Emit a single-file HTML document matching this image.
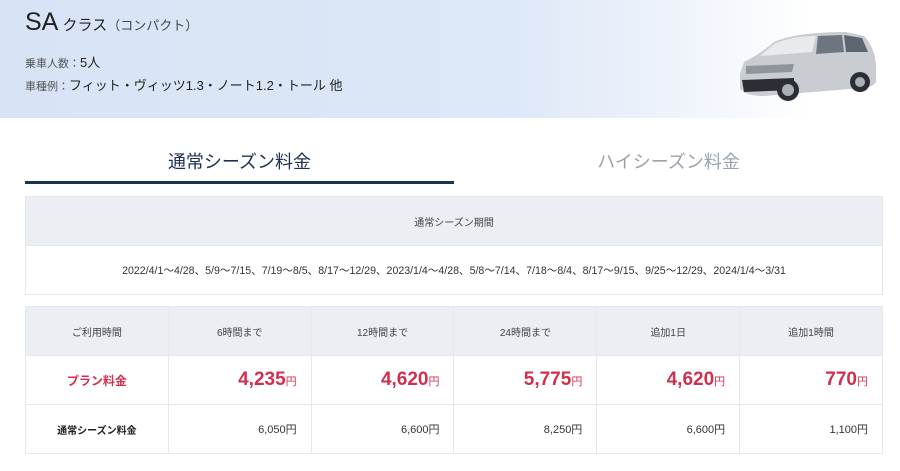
<!DOCTYPE html>
<html><head><meta charset="utf-8"><style>
*{margin:0;padding:0;box-sizing:border-box}
body{width:900px;height:471px;overflow:hidden;background:#fff;font-family:"Liberation Sans","Noto Sans CJK JP",sans-serif;color:#333;position:relative}
.hero{position:absolute;left:0;top:0;width:900px;height:118px;background:linear-gradient(90deg,#d8e4f6 0%,#dce7f7 55%,#eef3fb 75%,#fff 90%)}
.t1{position:absolute;left:25px;top:8px;font-size:25px;color:#222}
.t1 small{font-size:15px}
.t1 span.p{font-size:13px;color:#444}
.l{position:absolute;left:25px;font-size:11px;color:#555}
.l b{font-weight:normal;font-size:13px;color:#222}
.tab{position:absolute;top:148px;font-size:18px;width:429px;text-align:center}
.ul{position:absolute;left:25px;top:181px;width:429px;height:3px;background:#1d3150}
table{position:absolute;left:25px;width:858px;border-collapse:collapse;table-layout:fixed}
td{border:1px solid #e5e8ec;text-align:center;font-size:10px;height:49px}
.h td{background:#ebeef2;color:#444}
.r{text-align:right;padding-right:14px}
.red{color:#d0304d;font-weight:bold}
.big{font-size:19px;font-weight:bold;color:#d0304d}
.big i{font-style:normal;font-size:11px;font-weight:normal}
</style></head><body>
<div class="hero"></div>
<div class="t1">SA<small> クラス</small><span class="p">（コンパクト）</span></div>
<div class="l" style="top:52px">乗車人数：<b>5人</b></div>
<div class="l" style="top:75px">車種例：<b>フィット・ヴィッツ1.3・ノート1.2・トール 他</b></div>
<svg style="position:absolute;left:736px;top:24px" width="145" height="78" viewBox="0 0 145 78">
<path d="M4 50 L8 38 Q24 30 38 18 Q60 8 110 8 L128 12 Q138 22 140 40 L140 58 Q136 64 126 64 L28 72 Q8 72 4 64 Z" fill="#c9ccd0"/>
<path d="M38 20 Q56 12 80 12 L76 28 L24 32 Z" fill="#e8ebee"/>
<path d="M82 12 L106 11 L108 28 L80 30 Z" fill="#6d7680"/>
<path d="M108 11 L126 14 L132 28 L110 28 Z" fill="#5d6570"/>
<path d="M6 56 L58 54 L58 66 L8 68 Z" fill="#2b2f35"/>
<circle cx="52" cy="66" r="11" fill="#2b2f35"/><circle cx="52" cy="66" r="6" fill="#aab0b6"/>
<circle cx="124" cy="58" r="10" fill="#2b2f35"/><circle cx="124" cy="58" r="5" fill="#aab0b6"/>
<path d="M10 42 L58 40 L56 48 L10 50 Z" fill="#8f959c"/>
</svg>
<div class="tab" style="left:25px;color:#1d3150">通常シーズン料金</div>
<div class="tab" style="left:454px;color:#9aa3ad">ハイシーズン料金</div>
<div class="ul"></div>
<table style="top:196px">
<tr class="h"><td>通常シーズン期間</td></tr>
<tr><td style="font-size:10.6px">2022/4/1～4/28、5/9～7/15、7/19～8/5、8/17～12/29、2023/1/4～4/28、5/8～7/14、7/18～8/4、8/17～9/15、9/25～12/29、2024/1/4～3/31</td></tr>
</table>
<table style="top:306px">
<tr class="h"><td>ご利用時間</td><td>6時間まで</td><td>12時間まで</td><td>24時間まで</td><td>追加1日</td><td>追加1時間</td></tr>
<tr><td class="red" style="font-size:12px">プラン料金</td><td class="r big">4,235<i>円</i></td><td class="r big">4,620<i>円</i></td><td class="r big">5,775<i>円</i></td><td class="r big">4,620<i>円</i></td><td class="r big">770<i>円</i></td></tr>
<tr><td style="font-weight:bold;color:#222">通常シーズン料金</td><td class="r" style="font-size:11px">6,050円</td><td class="r" style="font-size:11px">6,600円</td><td class="r" style="font-size:11px">8,250円</td><td class="r" style="font-size:11px">6,600円</td><td class="r" style="font-size:11px">1,100円</td></tr>
</table>
</body></html>
